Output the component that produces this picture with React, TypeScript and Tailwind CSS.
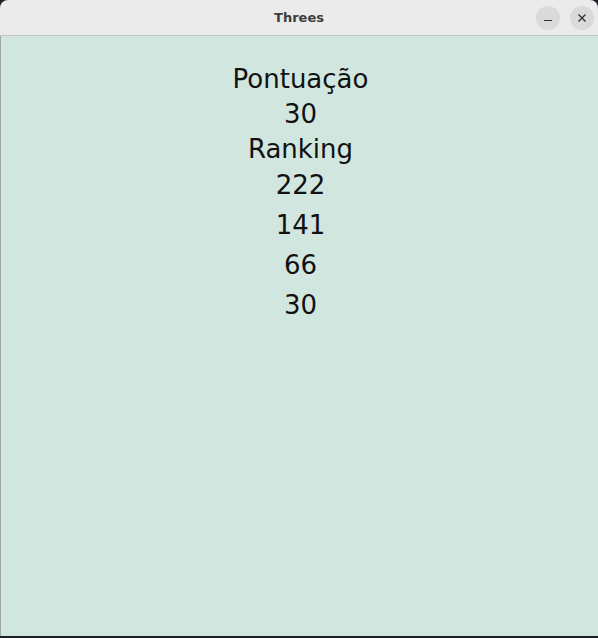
export default function App() {
  const ranking = [222, 141, 66, 30]

  return (
    <div className="w-[598px] h-[638px] flex flex-col bg-[#1e1f24] overflow-hidden font-['DejaVu_Sans',sans-serif]">
      <div className="h-[36px] shrink-0 flex items-center relative bg-[#ebebeb] border-b border-[#c4c4c4] rounded-t-[8px]">
        <div className="flex-1 text-center text-[13px] font-bold text-[#3d3d3d]">Threes</div>
        <div className="absolute right-[4px] top-[6px] flex gap-[10px]">
          <button className="w-[24px] h-[24px] rounded-full bg-[#dadada] flex items-center justify-center">
            <span className="block w-[8px] h-[1px] bg-[#333] mt-[4px]" />
          </button>
          <button className="w-[24px] h-[24px] rounded-full bg-[#dadada] flex items-center justify-center">
            <svg width="10" height="10" viewBox="0 0 10 10">
              <path d="M1.5 1.5 L8.5 8.5 M8.5 1.5 L1.5 8.5" stroke="#333" strokeWidth="1.4" />
            </svg>
          </button>
        </div>
      </div>
      <div className="h-[600px] shrink-0 bg-[#d1e6df] border-l border-[#9ea5a2] flex flex-col items-center pt-[26px] pl-[2px] text-[26px] text-[#111]">
        <div className="leading-[35px]">Pontuação</div>
        <div className="leading-[35px]">30</div>
        <div className="leading-[35px]">Ranking</div>
        <div className="flex flex-col items-center -mt-[2px]">
          {ranking.map((r, i) => (
            <div key={i} className="leading-[40px]">{r}</div>
          ))}
        </div>
      </div>
    </div>
  )
}
